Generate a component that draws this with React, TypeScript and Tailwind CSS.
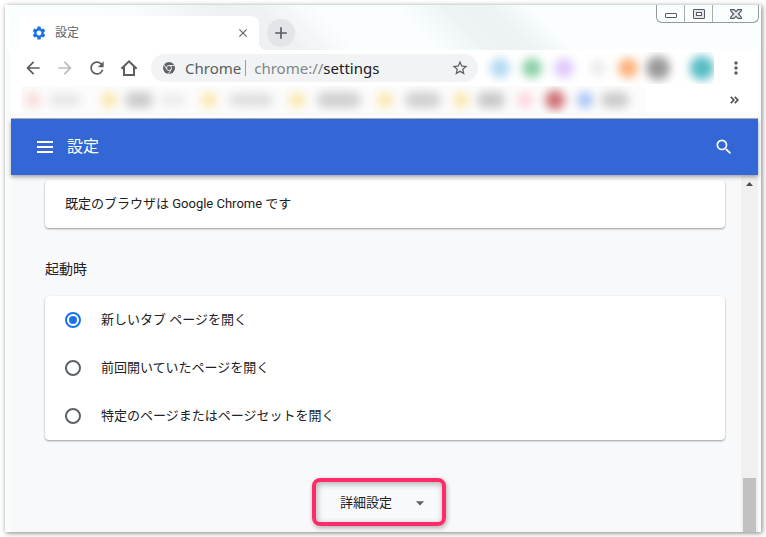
import { useState } from "react";
import type { ReactNode } from "react";
import {
  MdAdd,
  MdArrowBack,
  MdArrowDropDown,
  MdArrowForward,
  MdClose,
  MdMoreVert,
  MdRefresh,
  MdSearch,
  MdSettings,
  MdStarBorder,
} from "react-icons/md";

type IconButtonProps = {
  label: string;
  className?: string;
  children: ReactNode;
};

type Smudge = {
  className: string;
};

const STARTUP_OPTIONS = [
  { value: "newtab", label: "新しいタブ ページを開く" },
  { value: "continue", label: "前回開いていたページを開く" },
  { value: "specific", label: "特定のページまたはページセットを開く" },
];

// Extension icons and bookmarks are kept unreadable on purpose.
const EXTENSIONS: Smudge[] = [
  { className: "ml-2 size-5 bg-[#b3d9f2]" },
  { className: "ml-3 size-5 bg-[#8bd0a8]" },
  { className: "ml-3 size-5 bg-[#dfc8fa]" },
  { className: "ml-4 size-4 bg-[#ebebeb]" },
  { className: "ml-3 size-5 bg-[#fbb078]" },
  { className: "ml-2 size-6 bg-[#9a9a9a]" },
  { className: "ml-5 size-6 bg-[#56bcc4]" },
];

const BOOKMARKS: Smudge[] = [
  { className: "ml-1 size-4 bg-[#f8dcd8]" },
  { className: "ml-2 h-3 w-8 bg-[#e6e6e6]" },
  { className: "ml-5 size-4 bg-[#fbe8ae]" },
  { className: "ml-2 h-4 w-7 bg-[#cbcbcb]" },
  { className: "ml-2 h-2 w-6 bg-[#e6e6e6]" },
  { className: "ml-4 size-4 bg-[#fbe8ae]" },
  { className: "ml-3 h-3 w-11 bg-[#dcdcdc]" },
  { className: "ml-4 size-4 bg-[#fbe8ae]" },
  { className: "ml-3 h-4 w-11 bg-[#d0d0d0]" },
  { className: "ml-4 size-4 bg-[#fbe8ae]" },
  { className: "ml-3 h-4 w-9 bg-[#d0d0d0]" },
  { className: "ml-3 size-4 bg-[#fbe8ae]" },
  { className: "ml-2 h-4 w-7 bg-[#c8c8c8]" },
  { className: "ml-3 size-4 bg-[#fdd5dd]" },
  { className: "ml-3 size-5 bg-[#cf7075]" },
  { className: "ml-3 size-4 bg-[#a6c3f5]" },
  { className: "ml-2 mr-4 h-4 w-7 bg-[#cbcbcb]" },
];

function IconButton({ label, className = "", children }: IconButtonProps) {
  return (
    <button
      type="button"
      aria-label={label}
      className={`flex shrink-0 items-center justify-center ${className}`}
    >
      {children}
    </button>
  );
}

function SmudgeRow({ items }: { items: Smudge[] }) {
  return (
    <div aria-hidden="true" className="flex min-w-0 items-center overflow-hidden py-1">
      {items.map((item, index) => (
        <span
          key={index}
          className={`shrink-0 rounded-full blur-[5px] ${item.className}`}
        />
      ))}
    </div>
  );
}

function HomeIcon() {
  return (
    <svg viewBox="0 0 18 18" className="size-[18px]" fill="none" stroke="#5a5d61" strokeWidth="2">
      <path d="M1.4 9.8 9 2.3l7.6 7.5M4 8v8h10V8" />
    </svg>
  );
}

function ChromeIcon() {
  return (
    <svg viewBox="0 0 12 12" className="size-3 shrink-0">
      <circle cx="6" cy="6" r="6" fill="#5f6368" />
      <circle cx="6" cy="6" r="2.5" fill="#5f6368" stroke="#f1f3f4" strokeWidth="0.9" />
      <path
        d="M6 3.5h5.4M3.8 7.2 1.1 2.7M8.2 7.2 5.5 11.9"
        stroke="#f1f3f4"
        strokeWidth="0.9"
      />
    </svg>
  );
}

function WindowControls() {
  return (
    <div className="mr-[2px] flex h-[18px] w-[103px] shrink-0 divide-x divide-[#a9adad] rounded-b-md border border-t-0 border-[#959a9a]">
      <IconButton label="最小化" className="w-7">
        <svg viewBox="0 0 12 12" className="size-3" fill="#fff" stroke="#555967">
          <rect x="0.5" y="5.5" width="11" height="4" rx="0.5" />
        </svg>
      </IconButton>
      <IconButton label="最大化" className="w-7">
        <svg viewBox="0 0 12 10" className="h-2.5 w-3" fill="#e4e6e9" stroke="#555967">
          <rect x="0.5" y="0.5" width="11" height="9" rx="0.5" />
          <rect x="3.5" y="3.5" width="5" height="3" fill="#fff" />
        </svg>
      </IconButton>
      <IconButton label="閉じる" className="flex-1">
        <svg viewBox="0 0 12 10" className="h-2.5 w-3" fill="#e4e6e9" stroke="#555967" strokeWidth="1.2">
          <path d="M.7.6h3.3L6 2.7 8 .6h3.3v1.2L8.4 5l2.9 3.2v1.2H8L6 7.3 4 9.4H.7V8.2L3.6 5 .7 1.8z" />
        </svg>
      </IconButton>
    </div>
  );
}

function TabStrip() {
  return (
    <div className="flex h-[45px] items-start bg-[linear-gradient(45deg,#fbffff_0%,#f9fdfd_20%,#edf1f2_32%,#eef2f3_37%,#fafefe_44%,#fafefe_54%,#edf2f2_61%,#edf2f2_66%,#fafefe_71%)] pl-[14px]">
      <div className="relative mt-[11px] flex h-[34px] w-60 items-center rounded-t-lg bg-white pl-3 pr-2 text-[#5f6368]">
        <MdSettings className="size-4 text-[#1a73e8]" />
        <span className="ml-2 flex-1 text-xs">設定</span>
        <IconButton label="タブを閉じる" className="size-4">
          <MdClose className="size-[14px]" />
        </IconButton>
        <span className="absolute bottom-0 left-full size-2 bg-[radial-gradient(circle_at_100%_0,transparent_8px,#fff_8px)]" />
      </div>
      <IconButton
        label="新しいタブ"
        className="ml-2 mt-[14px] size-7 rounded-full bg-[#e3e6e9] text-[#5a5d61]"
      >
        <MdAdd className="size-5" />
      </IconButton>
      <div className="flex-1" />
      <WindowControls />
    </div>
  );
}

function Toolbar() {
  return (
    <div className="flex h-9 items-center bg-white pl-3 pr-3 text-[#5a5d61]">
      <IconButton label="戻る" className="w-5">
        <MdArrowBack className="size-5" />
      </IconButton>
      <IconButton label="進む" className="ml-3 w-5 text-[#babcbe]">
        <MdArrowForward className="size-5" />
      </IconButton>
      <IconButton label="再読み込み" className="ml-3 w-5">
        <MdRefresh className="size-5" />
      </IconButton>
      <IconButton label="ホーム" className="ml-3 w-5">
        <HomeIcon />
      </IconButton>
      <div className="ml-3 flex h-7 min-w-0 flex-1 items-center rounded-full bg-[#f1f3f4] pl-3 pr-2 font-['Noto_Sans','Noto_Sans_CJK_JP',sans-serif] text-[15px]">
        <ChromeIcon />
        <span className="ml-[10px]">Chrome</span>
        <span className="ml-1 mr-2 h-4 w-px shrink-0 bg-[#9a9da1]" />
        <label htmlFor="address" className="text-[#80868b]">
          chrome://
        </label>
        <input
          id="address"
          type="text"
          defaultValue="settings"
          className="min-w-0 flex-1 bg-transparent text-[#202124] outline-none"
        />
        <IconButton label="ブックマークに追加" className="size-5">
          <MdStarBorder className="size-[18px]" />
        </IconButton>
      </div>
      <div className="ml-1 flex w-60 shrink-0">
        <SmudgeRow items={EXTENSIONS} />
      </div>
      <IconButton label="メニュー" className="ml-1 w-5">
        <MdMoreVert className="size-5" />
      </IconButton>
    </div>
  );
}

function BookmarksBar() {
  return (
    <div className="flex h-[33px] items-start justify-between border-b border-[#b4b0b0] bg-white pl-[10px] pr-4">
      <div className="flex min-w-0 bg-[#fcfcfc]">
        <SmudgeRow items={BOOKMARKS} />
      </div>
      <IconButton label="他のブックマーク" className="h-7 w-4">
        <svg viewBox="0 0 9 8" className="h-2 w-[9px]" fill="none" stroke="#505357" strokeWidth="1.7">
          <path d="m.8.8 3 3.2-3 3.2M4.8.8l3 3.2-3 3.2" />
        </svg>
      </IconButton>
    </div>
  );
}

function SettingsHeader() {
  return (
    <header className="relative flex h-14 items-center bg-[#3367d6] px-6 text-white shadow-[0_2px_4px_rgba(0,0,0,0.35)]">
      <IconButton label="メインメニュー" className="size-5">
        <svg viewBox="0 0 16 12" className="h-3 w-4" fill="currentColor">
          <path d="M0 0h16v2H0zM0 5h16v2H0zM0 10h16v2H0z" />
        </svg>
      </IconButton>
      <h1 className="ml-3 flex-1 text-base">設定</h1>
      <IconButton label="設定項目を検索" className="size-5">
        <MdSearch className="size-5" />
      </IconButton>
    </header>
  );
}

function StartupOptions() {
  const [selected, setSelected] = useState("newtab");

  return (
    <div
      role="radiogroup"
      aria-labelledby="startup-heading"
      className="rounded bg-white shadow-[0_1px_2px_rgba(60,64,67,0.5)]"
    >
      {STARTUP_OPTIONS.map((option) => (
        <label key={option.value} className="flex h-12 items-center px-5">
          <input
            type="radio"
            name="startup"
            value={option.value}
            checked={selected === option.value}
            onChange={() => setSelected(option.value)}
            className="size-4 shrink-0 appearance-none rounded-full border-2 border-[#5f6368] bg-clip-content p-[2px] checked:border-[#1a73e8] checked:bg-[#1a73e8]"
          />
          <span className="ml-5">{option.label}</span>
        </label>
      ))}
    </div>
  );
}

function Scrollbar() {
  return (
    <div
      aria-hidden="true"
      className="flex w-[17px] shrink-0 flex-col items-center justify-between bg-[#f0f0f0] pt-[7px]"
    >
      <svg viewBox="0 0 7 4" className="h-1 w-[7px]" fill="#4d4d4d">
        <path d="M3.5 0 7 4H0z" />
      </svg>
      <div className="h-[54px] w-[13px] bg-[#c1c1c1]" />
    </div>
  );
}

export default function App() {
  return (
    <div className="flex min-h-screen flex-col bg-white p-[5px] font-['Roboto','Noto_Sans_CJK_JP',sans-serif] text-[13px] text-[#202124]">
      <div className="flex flex-1 flex-col bg-[#f8fcfc] shadow-[1px_1px_5px_rgba(0,0,0,0.5)]">
        <TabStrip />
        <div className="flex flex-1 flex-col pl-[6px] pr-[3px]">
          <Toolbar />
          <BookmarksBar />
          <SettingsHeader />
          <div className="flex flex-1 bg-[#f8f9fa]">
            <main className="flex-1 pb-[6px] pl-[34px] pr-4 pt-[5px]">
              <p className="flex h-12 items-center rounded bg-white px-5 shadow-[0_1px_2px_rgba(60,64,67,0.5)]">
                既定のブラウザは Google Chrome です
              </p>
              <h2 id="startup-heading" className="mb-[17px] mt-[31px] text-sm leading-5">
                起動時
              </h2>
              <StartupOptions />
              <div className="mt-[38px] flex justify-center pr-3">
                <button
                  type="button"
                  className="flex h-12 w-[134px] items-center justify-between rounded-lg border-4 border-[#ff2a68] pl-6 pr-3 pt-[2px] shadow-[1px_2px_5px_rgba(0,0,0,0.3),inset_1px_2px_6px_rgba(0,0,0,0.3)]"
                >
                  詳細設定
                  <MdArrowDropDown className="size-5 text-[#5f6368]" />
                </button>
              </div>
            </main>
            <Scrollbar />
          </div>
        </div>
      </div>
    </div>
  );
}
